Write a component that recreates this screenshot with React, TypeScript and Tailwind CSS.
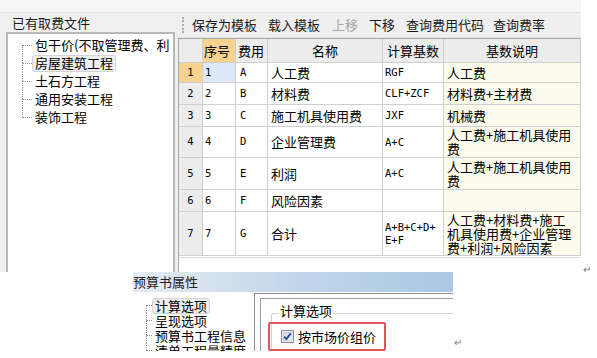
import React from 'react';

type TreeProps = {
  items: string[];
  selected: number;
  rowClass: string;
  lineMl: string;
  stubW: string;
  boxH: string;
};

function Tree({ items, selected, rowClass, lineMl, stubW, boxH }: TreeProps) {
  return (
    <div className="flex flex-col">
      {items.map((t, i) => (
        <div key={t} className={`flex items-stretch ${rowClass}`}>
          <div className={`flex flex-col shrink-0 ${lineMl} ${stubW}`}>
            <div className={`flex-1 ${i > 0 ? 'border-l border-dotted border-[#9a9a9a]' : ''}`} />
            <div
              className={`flex-1 border-t border-dotted border-[#9a9a9a] ${
                i < items.length - 1 ? 'border-l' : ''
              }`}
            />
          </div>
          <div className="flex items-center">
            <span
              className={`flex items-center whitespace-nowrap px-[2px] border rounded-[3px] ${boxH} ${
                i === selected ? 'border-[#d4d4d4] bg-[#efefef]' : 'border-transparent'
              }`}
            >
              {t}
            </span>
          </div>
        </div>
      ))}
    </div>
  );
}

type Row = {
  n: string;
  code: string;
  name: string;
  base: string[];
  desc: string[];
  h: string;
};

const rows: Row[] = [
  { n: '1', code: 'A', name: '人工费', base: ['RGF'], desc: ['人工费'], h: 'h-[20px]' },
  { n: '2', code: 'B', name: '材料费', base: ['CLF+ZCF'], desc: ['材料费+主材费'], h: 'h-[22px]' },
  { n: '3', code: 'C', name: '施工机具使用费', base: ['JXF'], desc: ['机械费'], h: 'h-[22px]' },
  { n: '4', code: 'D', name: '企业管理费', base: ['A+C'], desc: ['人工费+施工机具使用', '费'], h: 'h-[31px]' },
  { n: '5', code: 'E', name: '利润', base: ['A+C'], desc: ['人工费+施工机具使用', '费'], h: 'h-[32px]' },
  { n: '6', code: 'F', name: '风险因素', base: [], desc: [], h: 'h-[22px]' },
  {
    n: '7',
    code: 'G',
    name: '合计',
    base: ['A+B+C+D+', 'E+F'],
    desc: ['人工费+材料费+施工', '机具使用费+企业管理', '费+利润+风险因素'],
    h: 'h-[44px]',
  },
];

const cell = 'border-r border-b border-[#cfcfcf] flex items-center overflow-hidden';
const mono = "font-['DejaVu_Sans_Mono',monospace] text-[10.5px]";

function Grid() {
  return (
    <div className="ml-[2px] w-[403px] flex-1 bg-white border-l border-t border-[#a9a9a9] flex flex-col">
      <div className="grid grid-cols-[24px_33px_32px_115px_61px_137px]">
        <div className={`${cell} h-[24px] bg-[#ececec]`} />
        <div className={`${cell} h-[24px] bg-[#f8d38f] pl-[1px]`}>序号</div>
        <div className={`${cell} h-[24px] bg-[#ececec] pl-[2px]`}>费用</div>
        <div className={`${cell} h-[24px] bg-[#ececec] justify-center`}>名称</div>
        <div className={`${cell} h-[24px] bg-[#ececec] justify-center`}>计算基数</div>
        <div className={`${cell} h-[24px] bg-[#ececec] justify-center`}>基数说明</div>
        {rows.map((r, i) => (
          <React.Fragment key={r.n}>
            <div
              className={`${cell} ${r.h} justify-center ${mono} ${
                i === 0 ? 'bg-[#f8d38f]' : 'bg-[#ececec]'
              }`}
            >
              {r.n}
            </div>
            <div className={`${cell} ${r.h} pl-[2px] ${mono} ${i === 0 ? 'bg-[#dce8f6]' : ''}`}>{r.n}</div>
            <div className={`${cell} ${r.h} pl-[4px] ${mono}`}>{r.code}</div>
            <div className={`${cell} ${r.h} pl-[3px] whitespace-nowrap`}>{r.name}</div>
            <div className={`${cell} ${r.h} pl-[2px] ${mono} leading-[13px]`}>
              <div className="flex flex-col whitespace-nowrap">
                {r.base.map((b) => (
                  <span key={b}>{b}</span>
                ))}
              </div>
            </div>
            <div className={`${cell} ${r.h} pl-[3px] bg-[#fcfbee] leading-[14px]`}>
              <div className="flex flex-col whitespace-nowrap">
                {r.desc.map((d, k) => (
                  <span key={k}>{d}</span>
                ))}
              </div>
            </div>
          </React.Fragment>
        ))}
      </div>
      <div className="h-[2px] border-b border-[#dcdcdc]" />
    </div>
  );
}

function TopShot() {
  return (
    <div className="w-[581px] h-[272px] bg-[#f0f0f0] flex flex-col overflow-hidden shrink-0">
      <div className="h-[13px] shrink-0 bg-[#f6f6f6] border-b border-[#e0e0e0]" />
      <div className="flex flex-1 min-h-0">
        <div className="w-[176px] shrink-0 flex flex-col">
          <div className="h-[19px] flex items-center pl-[12px] text-[#1a1a1a]">已有取费文件</div>
          <div className="ml-[6px] w-[169px] flex-1 bg-white border-l-2 border-t-2 border-r-2 border-[#b8b8b8] pt-[2px]">
            <Tree
              items={['包干价(不取管理费、利', '房屋建筑工程', '土石方工程', '通用安装工程', '装饰工程']}
              selected={1}
              rowClass="h-[18px]"
              lineMl="ml-[14px]"
              stubW="w-[10px]"
              boxH="h-[17px]"
            />
          </div>
        </div>
        <div className="flex-1 flex flex-col">
          <div className="h-[25px] shrink-0 flex items-center bg-[#efefef] border-b border-[#e4e4e4] text-[#1a1a1a]">
            <span className="ml-[6px] w-[3px] h-[16px] border-l-2 border-dotted border-[#a8a8a8]" />
            <span className="ml-[7px]">保存为模板</span>
            <span className="ml-[11px]">载入模板</span>
            <span className="ml-[12px] text-[#a6a6a6]">上移</span>
            <span className="ml-[11px]">下移</span>
            <span className="ml-[11px]">查询费用代码</span>
            <span className="ml-[9px]">查询费率</span>
          </div>
          <Grid />
        </div>
      </div>
    </div>
  );
}

function Checkbox() {
  return (
    <svg width="13" height="13" viewBox="0 0 13 13" className="shrink-0">
      <defs>
        <linearGradient id="cbg" x1="0" y1="0" x2="1" y2="1">
          <stop offset="0" stopColor="#cdd6e2" />
          <stop offset="1" stopColor="#f4f6f9" />
        </linearGradient>
      </defs>
      <rect x="0.5" y="0.5" width="12" height="12" fill="#fff" stroke="#8e8f8f" />
      <rect x="2" y="2" width="9" height="9" fill="url(#cbg)" stroke="#a8b4c4" strokeWidth="0.6" />
      <path d="M3.2 6.6 L5.4 9 L9.8 3.4" fill="none" stroke="#26489a" strokeWidth="1.8" />
    </svg>
  );
}

function BottomShot() {
  return (
    <div className="ml-[133px] w-[320px] h-[79px] bg-white flex flex-col overflow-hidden shrink-0">
      <div className="h-[20px] shrink-0 bg-linear-to-r from-[#e6ecf3] via-[#c2d6ea] to-[#abc8e4] leading-[20px] text-[#222] whitespace-nowrap">
        预算书属性
      </div>
      <div className="flex flex-1 min-h-0">
        <div className="w-[121px] shrink-0 pt-[6px]">
          <Tree
            items={['计算选项', '呈现选项', '预算书工程信息', '清单工程量精度']}
            selected={0}
            rowClass="h-[15px]"
            lineMl="ml-[13px]"
            stubW="w-[6px]"
            boxH="h-[16px]"
          />
        </div>
        <div className="flex-1 flex flex-col mt-[1px] border-l border-t border-[#8f8f8f] pl-[5px] pt-[4px]">
          <div className="flex-1 border-l border-t border-[#9d9d9d] pl-[10px] pt-[4px]">
            <fieldset className="border-t border-l border-[#d2d2d2] rounded-tl-[3px] h-[60px]">
              <legend className="ml-[7px] px-[1px] leading-[16px] pb-[4px] whitespace-nowrap">计算选项</legend>
              <div className="-mt-[1px] -ml-[4px] w-[118px] h-[29px] border-2 border-[#e0555a] rounded-[2px] flex items-center pl-[11px] gap-[4px] whitespace-nowrap">
                <Checkbox />
                <span>按市场价组价</span>
              </div>
            </fieldset>
          </div>
        </div>
      </div>
    </div>
  );
}

export default function App() {
  return (
    <div className="w-[597px] h-[358px] bg-white overflow-hidden font-['Noto_Sans_CJK_SC',sans-serif] text-[13px] text-black">
      <div className="flex items-end">
        <TopShot />
        <span className="ml-[2px] mb-[-2px] text-[10px] leading-[10px] text-[#7a7a7a]">↵</span>
      </div>
      <div className="flex items-end">
        <BottomShot />
        <span className="ml-[1px] mb-[4px] text-[10px] leading-[10px] text-[#7a7a7a]">↵</span>
      </div>
    </div>
  );
}
